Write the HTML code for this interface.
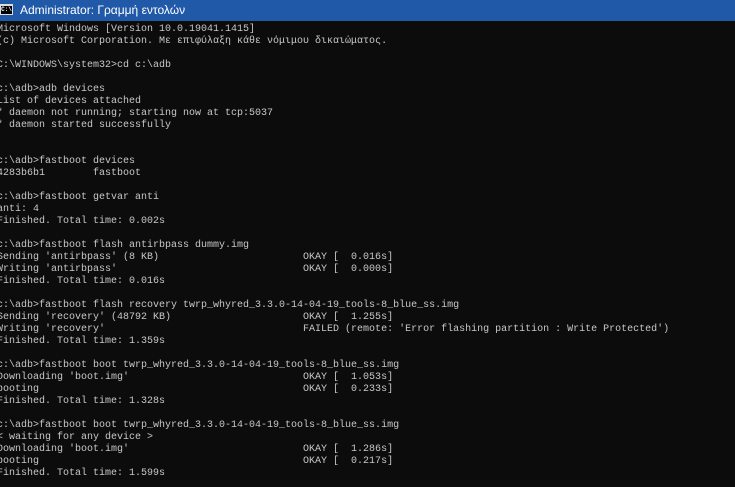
<!DOCTYPE html>
<html><head><meta charset="utf-8"><style>
html,body{margin:0;padding:0;width:735px;height:487px;overflow:hidden;background:#0c0c0c;}
#tb{position:absolute;left:0;top:0;width:735px;height:21px;background:#2159a9;}
#ic{position:absolute;left:0;top:4px;width:13px;height:11px;background:#000;border:1px solid #ddd;border-top-width:2px;box-sizing:border-box;color:#fff;font:bold 6px "Liberation Mono",monospace;line-height:8px;text-align:center;overflow:hidden}
#tt{position:absolute;left:20px;top:2px;color:#fff;font:12px "Liberation Sans","DejaVu Sans",sans-serif;line-height:17px;}
pre{position:absolute;left:-3px;top:24px;margin:0;font:10px "Liberation Mono","DejaVu Sans Mono",monospace;line-height:12px;color:#c8c8c8;white-space:pre;}
</style></head><body>
<div id="tb"><div id="ic">C:\</div><div id="tt">Administrator: Γραμμή εντολών</div></div>
<pre>Microsoft Windows [Version 10.0.19041.1415]
(c) Microsoft Corporation. Με επιφύλαξη κάθε νόμιμου δικαιώματος.

C:\WINDOWS\system32&gt;cd c:\adb

c:\adb&gt;adb devices
List of devices attached
* daemon not running; starting now at tcp:5037
* daemon started successfully


c:\adb&gt;fastboot devices
4283b6b1        fastboot

c:\adb&gt;fastboot getvar anti
anti: 4
Finished. Total time: 0.002s

c:\adb&gt;fastboot flash antirbpass dummy.img
Sending 'antirbpass' (8 KB)                        OKAY [  0.016s]
Writing 'antirbpass'                               OKAY [  0.000s]
Finished. Total time: 0.016s

c:\adb&gt;fastboot flash recovery twrp_whyred_3.3.0-14-04-19_tools-8_blue_ss.img
Sending 'recovery' (48792 KB)                      OKAY [  1.255s]
Writing 'recovery'                                 FAILED (remote: 'Error flashing partition : Write Protected')
Finished. Total time: 1.359s

c:\adb&gt;fastboot boot twrp_whyred_3.3.0-14-04-19_tools-8_blue_ss.img
Downloading 'boot.img'                             OKAY [  1.053s]
booting                                            OKAY [  0.233s]
Finished. Total time: 1.328s

c:\adb&gt;fastboot boot twrp_whyred_3.3.0-14-04-19_tools-8_blue_ss.img
&lt; waiting for any device &gt;
Downloading 'boot.img'                             OKAY [  1.286s]
booting                                            OKAY [  0.217s]
Finished. Total time: 1.599s</pre>
</body></html>
